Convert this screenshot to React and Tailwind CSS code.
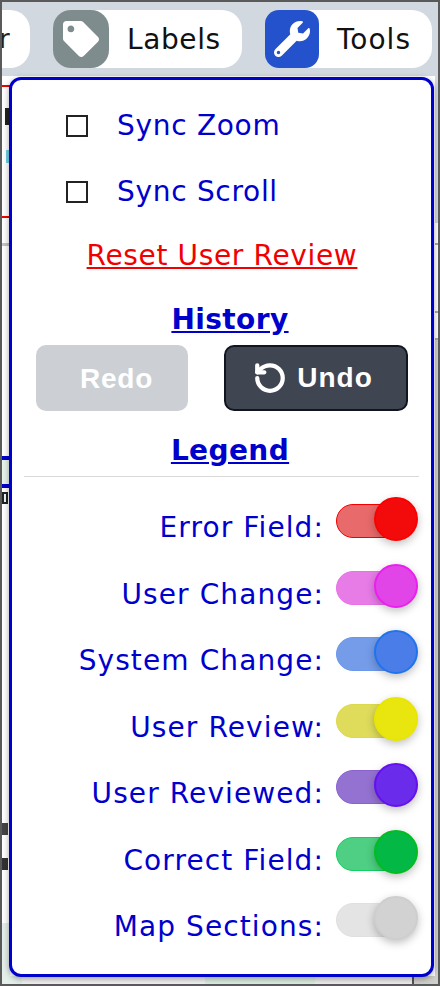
import { FaTag, FaWrench } from 'react-icons/fa';
import { RotateCcw } from 'lucide-react';

const LEGEND = [
  { label: 'Error Field:', track: 'bg-[#e96a6a] border-[#f50000]', knob: 'bg-[#f30b0b] border-[#fb0000]' },
  { label: 'User Change:', track: 'bg-[#e77ce7] border-[#ea70ea]', knob: 'bg-[#e145e8] border-[#ea1fee]' },
  { label: 'System Change:', track: 'bg-[#749ce9] border-[#6c98ec]', knob: 'bg-[#4a7de8] border-[#1f74ee]' },
  { label: 'User Review:', track: 'bg-[#dfdc5c] border-[#dcd94a]', knob: 'bg-[#e8e60e] border-[#e8e600]' },
  { label: 'User Reviewed:', track: 'bg-[#9472d2] border-[#8a62d0]', knob: 'bg-[#6a2bea] border-[#6410f0]' },
  { label: 'Correct Field:', track: 'bg-[#4ecf83] border-[#10d060]', knob: 'bg-[#04b845] border-[#00bd20]' },
  { label: 'Map Sections:', track: 'bg-[#e4e4e4] border-[#e0e0e0]', knob: 'bg-[#d2d2d2] border-[#cecece]' },
];

function Toggle({ track, knob }) {
  return (
    <div className="relative w-[82px] h-[44px] shrink-0">
      <div className={`absolute left-0 top-[7px] w-[70px] h-[34px] rounded-full border ${track}`} />
      <div className={`absolute right-0 top-0 w-[44px] h-[44px] rounded-full border-2 shadow-[0_3px_8px_rgba(0,0,0,0.25)] ${knob}`} />
    </div>
  );
}

function SyncRow({ label }) {
  return (
    <div className="flex items-center h-[66px] pl-[54px]">
      <div className="w-[22px] h-[22px] border-2 border-[#222] bg-white" />
      <span className="ml-[29px] text-[28px] tracking-[0.7px] text-[#0000cd]">{label}</span>
    </div>
  );
}

export default function App() {
  return (
    <div className="relative flex flex-col w-[440px] h-[986px] overflow-hidden bg-white border-2 border-[#5a5a5a] font-['DejaVu_Sans',sans-serif]">
      {/* Toolbar */}
      <div className="flex items-start h-[74px] shrink-0 bg-[#d1d8df] pt-[8px] gap-[23px]">
        <div className="w-[28px] h-[58px] bg-white rounded-r-[20px] shrink-0 flex items-center">
          <span className="text-[26px] text-[#222] leading-none -ml-[3px]">r</span>
        </div>
        <div className="flex items-center w-[189px] h-[58px] bg-white rounded-[20px] shrink-0">
          <div className="flex items-center justify-center w-[56px] h-[58px] rounded-[18px] bg-[#7f8c8d]">
            <FaTag className="w-[36px] h-[36px] text-white" />
          </div>
          <span className="ml-[18px] mt-[2px] text-[28px] tracking-[0.6px] text-[#111]">Labels</span>
        </div>
        <div className="flex items-center w-[167px] h-[58px] bg-white rounded-[20px] shrink-0">
          <div className="flex items-center justify-center w-[54px] h-[58px] rounded-[14px] bg-[#2452cc]">
            <FaWrench className="w-[36px] h-[36px] text-white" />
          </div>
          <span className="ml-[18px] mt-[2px] text-[28px] tracking-[1px] text-[#111]">Tools</span>
        </div>
      </div>

      {/* Page behind the menu, only its edges show */}
      <div className="flex justify-between flex-1">
        <div className="w-[8px] flex flex-col">
          <div className="h-[9px]" />
          <div className="h-[2px] bg-[#f00000]" />
          <div className="h-[21px]" />
          <div className="h-[17px] w-[4px] ml-[3px] bg-[#222]" />
          <div className="h-[25px]" />
          <div className="h-[13px] w-[3px] ml-[4px] bg-[#6fd3e8]" />
          <div className="h-[53px]" />
          <div className="h-[2px] bg-[#f00000]" />
          <div className="h-[25px]" />
          <div className="h-[3px] bg-[#c4c4c4]" />
          <div className="h-[210px]" />
          <div className="h-[4px] bg-[#0000cd]" />
          <div className="h-[24px] bg-[#e6f2ea]" />
          <div className="h-[4px] bg-[#0000cd]" />
          <div className="h-[4px]" />
          <div className="h-[12px] w-[6px] border-2 border-[#222] bg-[#e8f8f8]" />
          <div className="h-[319px]" />
          <div className="h-[12px] w-[6px] bg-[#444]" />
          <div className="h-[23px]" />
          <div className="h-[12px] w-[6px] bg-[#333]" />
          <div className="h-[53px]" />
          <div className="flex-1 bg-[#e4efe9]" />
        </div>
        <div className="w-[3px] flex flex-col">
          <div className="h-[147px] bg-[#d1d8df]" />
          <div className="h-[22px] bg-white border-b-2 border-[#aaa]" />
          <div className="h-[68px] bg-white border-b-2 border-[#aaa]" />
          <div className="h-[27px] bg-white border-b-2 border-[#aaa]" />
          <div className="flex-1 bg-[#cfcfcb]" />
        </div>
      </div>
      <div className="flex h-[8px] shrink-0">
        <div className="w-[20px] bg-[#e4efe9]" />
        <div className="w-[183px] bg-[#f2f2f2]" />
        <div className="w-[110px] bg-[#dcefe2]" />
        <div className="w-[97px] bg-[#eeeeee]" />
        <div className="w-[2px] bg-[#555]" />
        <div className="flex-1 bg-[#cfcfcb]" />
      </div>

      {/* Tools menu */}
      <div className="absolute left-[7px] top-[75px] w-[425px] h-[900px] bg-white border-[3px] border-[#0000cd] rounded-[12px] shadow-[0_2px_6px_rgba(0,0,0,0.35)]">
        <div className="pt-[13px]">
          <SyncRow label="Sync Zoom" />
          <SyncRow label="Sync Scroll" />
        </div>
        <div className="mt-[14px] pl-[1px] text-center text-[28px] tracking-[0.65px] leading-[34px] text-[#f00000] underline">Reset User Review</div>
        <div className="mt-[30px] ml-[17px] text-center text-[28px] tracking-[0.4px] leading-[34px] font-bold text-[#0000cd] underline">History</div>
        <div className="flex justify-between mt-[8px] pl-[24px] pr-[23px]">
          <button className="pl-[9px] pt-[2px] w-[152px] h-[66px] rounded-[10px] bg-[#ccd0d4] text-white text-[28px] tracking-[0.8px] font-bold font-['Liberation_Sans',sans-serif]">Redo</button>
          <button className="flex items-center justify-center gap-[10px] pr-[6px] w-[184px] h-[66px] rounded-[10px] bg-[#3f4652] border-2 border-[#10151f] text-white text-[28px] tracking-[1px] font-bold font-['Liberation_Sans',sans-serif]">
            <RotateCcw className="w-[34px] h-[34px]" strokeWidth={3} />
            Undo
          </button>
        </div>
        <div className="mt-[23px] ml-[17px] text-center text-[28px] tracking-[0.4px] leading-[34px] font-bold text-[#0000cd] underline">Legend</div>
        <div className="mx-[12px] mt-[8px] h-px bg-[#d8d8d8]" />
        <div className="mt-[20px] pr-[13px]">
          {LEGEND.map((row) => (
            <div key={row.label} className="flex justify-end h-[66.5px]">
              <span className="mt-[14px] text-[28px] tracking-[1.1px] leading-[34px] text-[#0000cd] whitespace-nowrap">{row.label}</span>
              <div className="ml-[12px]">
                <Toggle track={row.track} knob={row.knob} />
              </div>
            </div>
          ))}
        </div>
      </div>
    </div>
  );
}
